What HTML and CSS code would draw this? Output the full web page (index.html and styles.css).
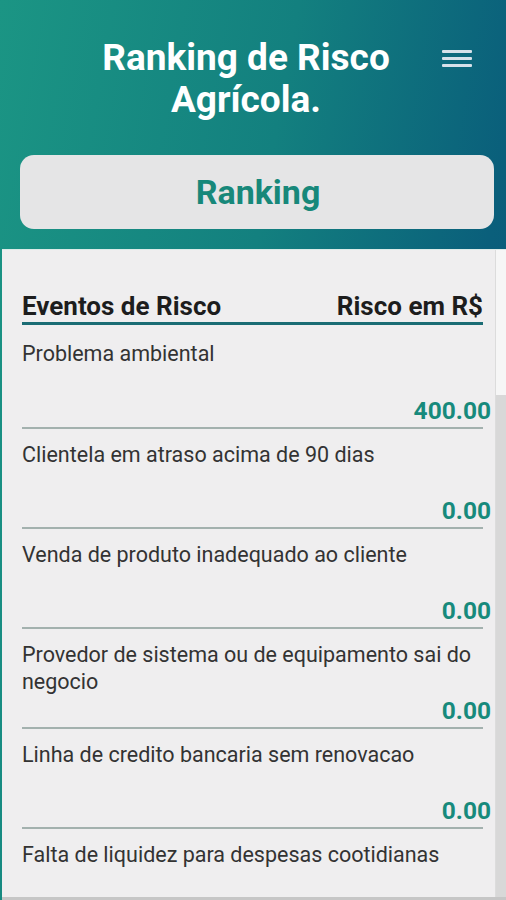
FILE: index.html
```html
<!DOCTYPE html>
<html>
	<head>
		<meta charset="utf-8" />
		<title>Ranking de Risco Agrícola</title>
		<link rel="stylesheet" href="styles.css">
	</head>
	<body>
		<div class="topo">
			<div class="titulo">
				<h1>Ranking de Risco<br>Agrícola.</h1>
				<a class="menu" href="javascript:;"><i></i><i></i><i></i></a>
			</div>
			<div class="btn-ranking">Ranking</div>
		</div>
		<div class="painel">
			<div class="lista">
				<div class="cabecalho">
					<span>Eventos de Risco</span>
					<span>Risco em R$</span>
				</div>
				<ul>
					<li class="primeiro">
						<p>Problema ambiental</p>
						<b>400.00</b>
					</li>
					<li>
						<p>Clientela em atraso acima de 90 dias</p>
						<b>0.00</b>
					</li>
					<li>
						<p>Venda de produto inadequado ao cliente</p>
						<b>0.00</b>
					</li>
					<li>
						<p>Provedor de sistema ou de equipamento sai do negocio</p>
						<b>0.00</b>
					</li>
					<li>
						<p>Linha de credito bancaria sem renovacao</p>
						<b>0.00</b>
					</li>
					<li>
						<p>Falta de liquidez para despesas cootidianas</p>
					</li>
				</ul>
			</div>
			<div class="rolagem"><i></i></div>
		</div>
	</body>
</html>
```

FILE: styles.css
```css
body,h1,p,ul,li{
	margin: 0;
	padding: 0;
}
ul,li{
	list-style: none;
}
html,body{
	height: 100%;
	overflow: hidden;
}
body{
	font-family: Roboto, "Liberation Sans", sans-serif;
	background: linear-gradient(100deg, #1b9584 0%, #13807f 45%, #0a5f7b 80%, #075578 100%);
	display: flex;
	flex-direction: column;
}
.topo{
	height: 249px;
	flex-shrink: 0;
}
.titulo{
	position: relative;
	padding-top: 37px;
	height: 118px;
	box-sizing: border-box;
}
.titulo h1{
	color: #fff;
	font-size: 37px;
	font-weight: 700;
	line-height: 42px;
	text-align: center;
	padding-right: 14px;
}
.menu{
	position: absolute;
	top: 50px;
	left: 442px;
	width: 30px;
	display: flex;
	flex-direction: column;
	gap: 4px;
}
.menu i{
	height: 3px;
	background: #d6e1ea;
	border-radius: 1px;
}
.btn-ranking{
	margin: 37px 12px 0 20px;
	height: 74px;
	border-radius: 14px;
	background: #e5e5e6;
	color: #17887a;
	font-size: 34px;
	font-weight: 700;
	line-height: 74px;
	text-align: center;
	text-indent: 2px;
}
.painel{
	flex: 1;
	display: flex;
	margin-left: 2px;
	background: #efeeef;
	border-top: 1px solid #dcebe8;
	border-bottom: 3px solid #c6c6c6;
	overflow: hidden;
}
.lista{
	flex: 1;
	padding: 41px 0 0 20px;
	border-right: 1px solid #dcdcdc;
}
.cabecalho{
	display: flex;
	justify-content: space-between;
	margin-right: 12px;
	padding: 0 0 1px 0;
	border-bottom: 3px solid #1b6c74;
	font-size: 26px;
	font-weight: 700;
	color: #1d1d1d;
	line-height: 30px;
	white-space: nowrap;
}
.lista li{
	position: relative;
	height: 98px;
	margin-right: 12px;
	border-bottom: 2px solid #a3b1ae;
}
.lista li.primeiro{
	height: 102px;
}
.lista li p{
	padding: 12px 0 0 0;
	margin-right: -6px;
	font-size: 21.5px;
	line-height: 27px;
	color: #333;
}
.lista li.primeiro p{
	padding-top: 15px;
}
.lista li b{
	position: absolute;
	right: -8px;
	bottom: 2px;
	font-size: 24.5px;
	color: #178a7c;
	line-height: 28px;
}
.rolagem{
	width: 10px;
	background: #f6f6f6;
	display: flex;
	flex-direction: column;
}
.rolagem i{
	margin-top: 145px;
	flex: 1;
	background: #d8d8d8;
}
```
